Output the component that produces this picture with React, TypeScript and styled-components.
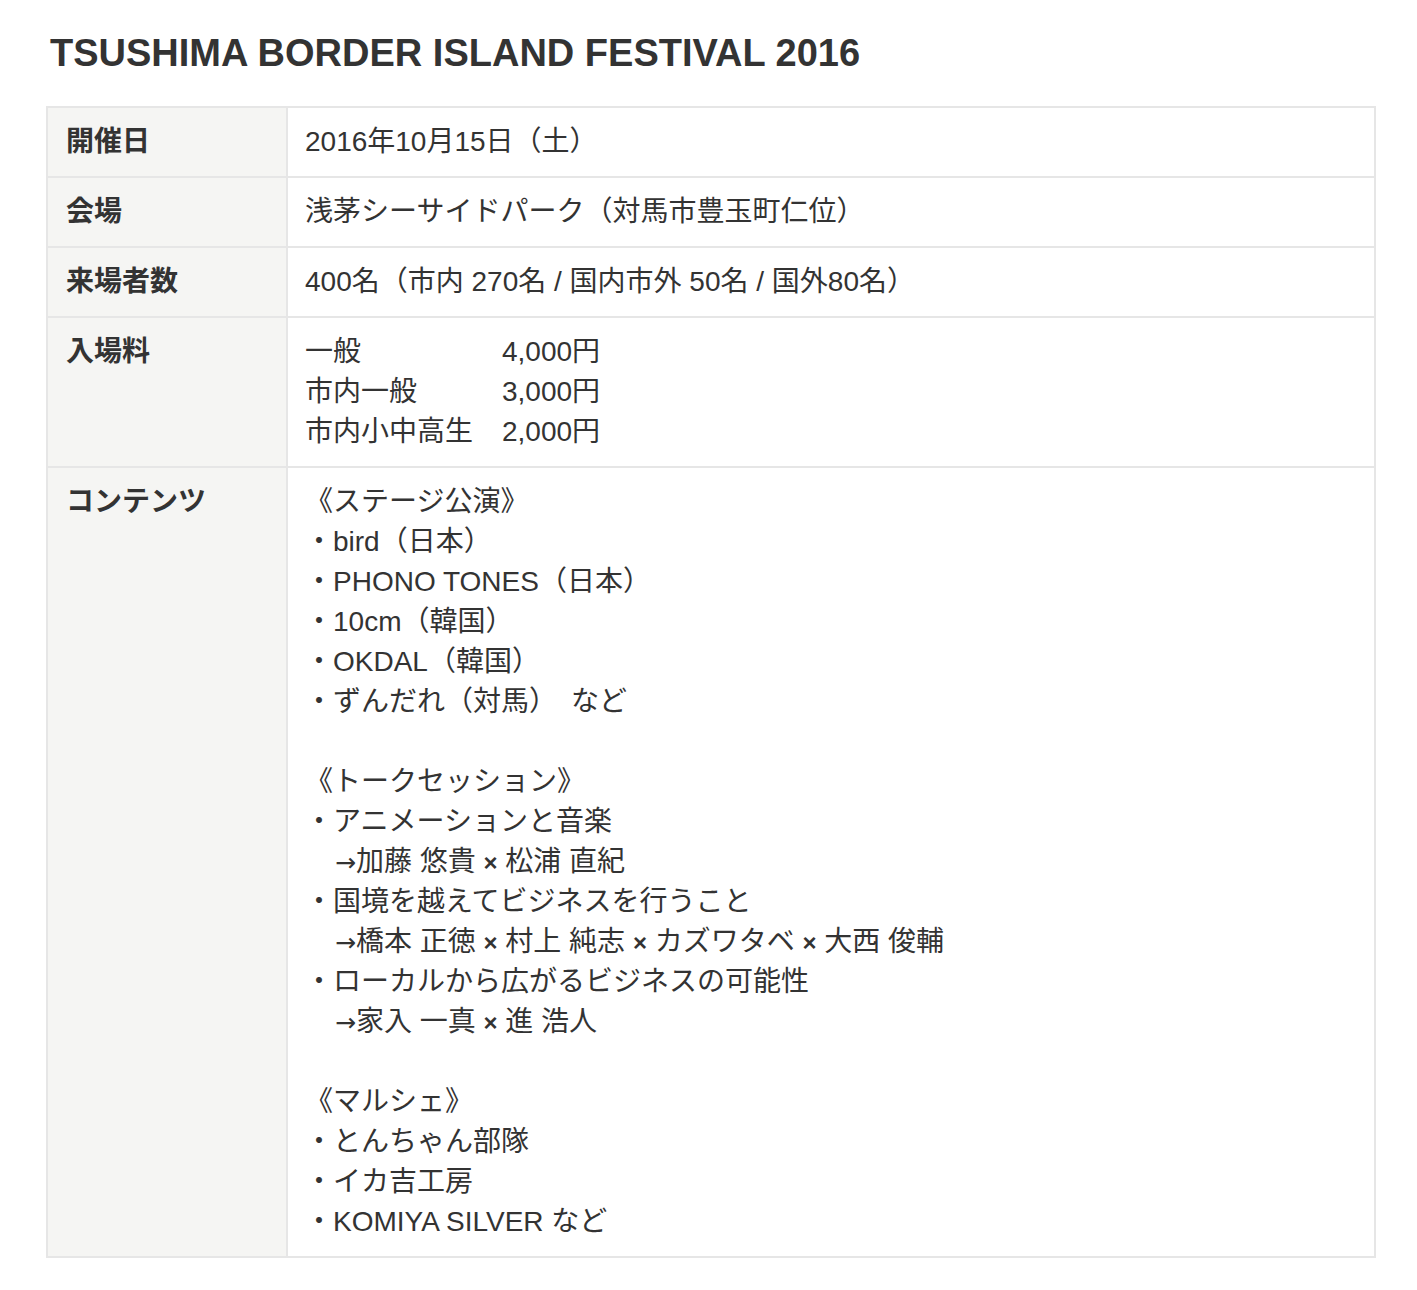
import React from 'react';
import styled, { createGlobalStyle } from 'styled-components';

const GlobalStyle = createGlobalStyle`
  body {
    margin: 0;
    background: #fff;
    color: #333;
    font-family: "Liberation Sans", "Noto Sans CJK JP", sans-serif;
  }
`;

const SPage = styled.div`
  padding: 26px 41px 34px 46px;
`;

const STitle = styled.h1`
  margin: 0 0 26px 4px;
  font-family: "Liberation Sans", "Noto Sans CJK JP", sans-serif;
  font-size: 38px;
  font-weight: 700;
  line-height: 54px;
  color: #333;
`;

const STable = styled.table`
  width: 100%;
  border-collapse: collapse;
  border: 2px solid #e6e6e6;
`;

const SRow = styled.tr`
  border-bottom: 2px solid #e6e6e6;
`;

const SLabel = styled.th`
  width: 202px;
  padding: 14px 18px;
  background: #f5f5f3;
  border-right: 2px solid #e6e6e6;
  text-align: left;
  vertical-align: top;
  font-size: 28px;
  font-weight: 700;
  line-height: 40px;
  color: #333;
`;

const SData = styled.td`
  padding: 14px 17px;
  vertical-align: top;
  font-size: 28px;
  line-height: 40px;
  color: #333;
`;

const SLine = styled.div`
  height: 40px;
`;

const SArrow = styled.span`
  font-family: "DejaVu Sans", sans-serif;
  font-size: 25px;
  line-height: 1;
  margin-left: 2px;
`;

const SCross = styled.span`
  font-size: 24px;
  font-weight: 700;
  line-height: 1;
`;

const SPriceGrid = styled.div`
  display: grid;
  grid-template-columns: 197px auto;
`;

const prices = [
  ['一般', '4,000円'],
  ['市内一般', '3,000円'],
  ['市内小中高生', '2,000円'],
];

const contents = [
  '《ステージ公演》',
  '・bird（日本）',
  '・PHONO TONES（日本）',
  '・10cm（韓国）',
  '・OKDAL（韓国）',
  '・ずんだれ（対馬）　など',
  '',
  '《トークセッション》',
  '・アニメーションと音楽',
  '　→加藤 悠貴 × 松浦 直紀',
  '・国境を越えてビジネスを行うこと',
  '　→橋本 正徳 × 村上 純志 × カズワタベ × 大西 俊輔',
  '・ローカルから広がるビジネスの可能性',
  '　→家入 一真 × 進 浩人',
  '',
  '《マルシェ》',
  '・とんちゃん部隊',
  '・イカ吉工房',
  '・KOMIYA SILVER など',
];

const renderLine = (line: string) => {
  if (!line.startsWith('　→')) return line;
  const parts = line.slice(2).split('×');
  return (
    <>
      {'　'}
      <SArrow>→</SArrow>
      {parts.map((part, i) => (
        <React.Fragment key={i}>
          {i > 0 && <SCross>×</SCross>}
          {part}
        </React.Fragment>
      ))}
    </>
  );
};

const App = () => {
  return (
    <SPage>
      <GlobalStyle />
      <STitle>TSUSHIMA BORDER ISLAND FESTIVAL 2016</STitle>
      <STable>
        <tbody>
          <SRow>
            <SLabel>開催日</SLabel>
            <SData>2016年10月15日（土）</SData>
          </SRow>
          <SRow>
            <SLabel>会場</SLabel>
            <SData>浅茅シーサイドパーク（対馬市豊玉町仁位）</SData>
          </SRow>
          <SRow>
            <SLabel>来場者数</SLabel>
            <SData>400名（市内 270名 / 国内市外 50名 / 国外80名）</SData>
          </SRow>
          <SRow>
            <SLabel>入場料</SLabel>
            <SData>
              <SPriceGrid>
                {prices.map(([name, price]) => (
                  <React.Fragment key={name}>
                    <span>{name}</span>
                    <span>{price}</span>
                  </React.Fragment>
                ))}
              </SPriceGrid>
            </SData>
          </SRow>
          <SRow>
            <SLabel>コンテンツ</SLabel>
            <SData>
              {contents.map((line, i) => (
                <SLine key={i}>{renderLine(line)}</SLine>
              ))}
            </SData>
          </SRow>
        </tbody>
      </STable>
    </SPage>
  );
};

export default App;
